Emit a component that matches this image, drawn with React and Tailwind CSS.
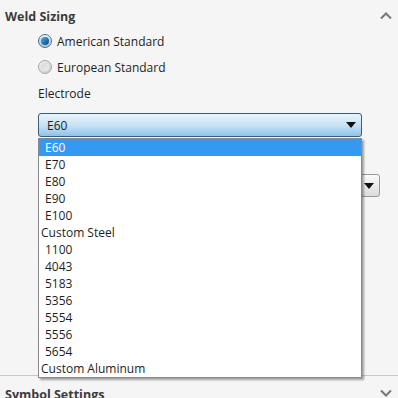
import { useState } from "react";

const options = [
    { label: "E60", indent: true },
    { label: "E70", indent: true },
    { label: "E80", indent: true },
    { label: "E90", indent: true },
    { label: "E100", indent: true },
    { label: "Custom Steel", indent: false },
    { label: "1100", indent: true },
    { label: "4043", indent: true },
    { label: "5183", indent: true },
    { label: "5356", indent: true },
    { label: "5554", indent: true },
    { label: "5556", indent: true },
    { label: "5654", indent: true },
    { label: "Custom Aluminum", indent: false },
];

const Chevron = ({ up }) => (
    <svg width="12" height="8" viewBox="0 0 12 8" className="text-[#777]">
        <path
            d={up ? "M1 6.5 L6 1.5 L11 6.5" : "M1 1.5 L6 6.5 L11 1.5"}
            fill="none"
            stroke="currentColor"
            strokeWidth="2"
        />
    </svg>
);

const Arrow = () => (
    <svg width="10" height="6" viewBox="0 0 10 6">
        <path d="M0 0 L10 0 L5 6 Z" fill="#111" />
    </svg>
);

const Radio = ({ checked, label }) => (
    <div className="flex items-center h-[26px]">
        {checked ? (
            <span className="w-[14px] h-[14px] rounded-full border border-[#4f6f8a] bg-gradient-to-b from-[#e9f2f9] to-[#a9c3d8] flex items-center justify-center">
                <span className="w-[8px] h-[8px] rounded-full bg-gradient-to-br from-[#4fb0ef] to-[#0a4378]" />
            </span>
        ) : (
            <span className="w-[14px] h-[14px] rounded-full border border-[#a5a5a5] bg-gradient-to-br from-[#f4f4f4] to-[#c9c9c9] flex items-center justify-center">
                <span className="w-[8px] h-[8px] rounded-full bg-gradient-to-br from-[#d6d6d6] to-[#ececec]" />
            </span>
        )}
        <span className="ml-[5px]">{label}</span>
    </div>
);

const App = () => {
    const [selected] = useState("E60");

    return (
        <div className="w-[398px] h-[398px] overflow-hidden bg-[#f5f5f5] text-[#1e1e1e] text-[12px] leading-[17px] font-['Open_Sans',sans-serif] relative">
            <div className="flex items-center justify-between h-[28px] pt-[4px] pl-[5px] pr-[6px]">
                <span className="font-bold text-[#3b3b3b] text-[12.5px]">Weld Sizing</span>
                <Chevron up />
            </div>

            <div className="pl-[38px]">
                <div className="flex flex-col">
                    <Radio checked label="American Standard" />
                    <Radio label="European Standard" />
                </div>
                <div className="h-[26px] flex items-center">Electrode</div>

                <div className="mt-[7px] w-[324px] h-[24px] rounded-[3px] border border-[#3d5c78] bg-gradient-to-b from-[#eaf4fc] via-[#c8e3f6] to-[#8ec3ea] flex items-center justify-between pl-[8px] pr-[5px]">
                    <span>{selected}</span>
                    <Arrow />
                </div>

                <div className="mt-[37px] w-[342px] h-[23px] rounded-[3px] border border-[#9a9a9a] bg-gradient-to-b from-[#fbfbfb] to-[#dcdcdc] flex items-center justify-end pr-[5px]">
                    <Arrow />
                </div>

                <div className="mt-[143px] w-[324px] h-[23px] border-r-2 border-[#444]" />
            </div>

            <div className="mt-[12px] border-t border-[#c8c8c8] flex items-center justify-between h-[34px] pl-[5px] pr-[6px]">
                <span className="font-bold text-[#3b3b3b] text-[12.5px] mt-[3px]">Symbol Settings</span>
                <Chevron />
            </div>

            <div className="absolute left-[38px] top-[138px] w-[324px] bg-white border border-[#8a8a8a] shadow-[2px_2px_2px_rgba(0,0,0,0.35)]">
                {options.map((opt) => (
                    <div
                        key={opt.label}
                        className={
                            (opt.label === selected ? "bg-[#3399f3] text-white " : "") +
                            (opt.indent ? "pl-[6px] " : "pl-[2px] ") +
                            "h-[17px] flex items-center"
                        }
                    >
                        {opt.label}
                    </div>
                ))}
            </div>
        </div>
    );
};

export default App;
